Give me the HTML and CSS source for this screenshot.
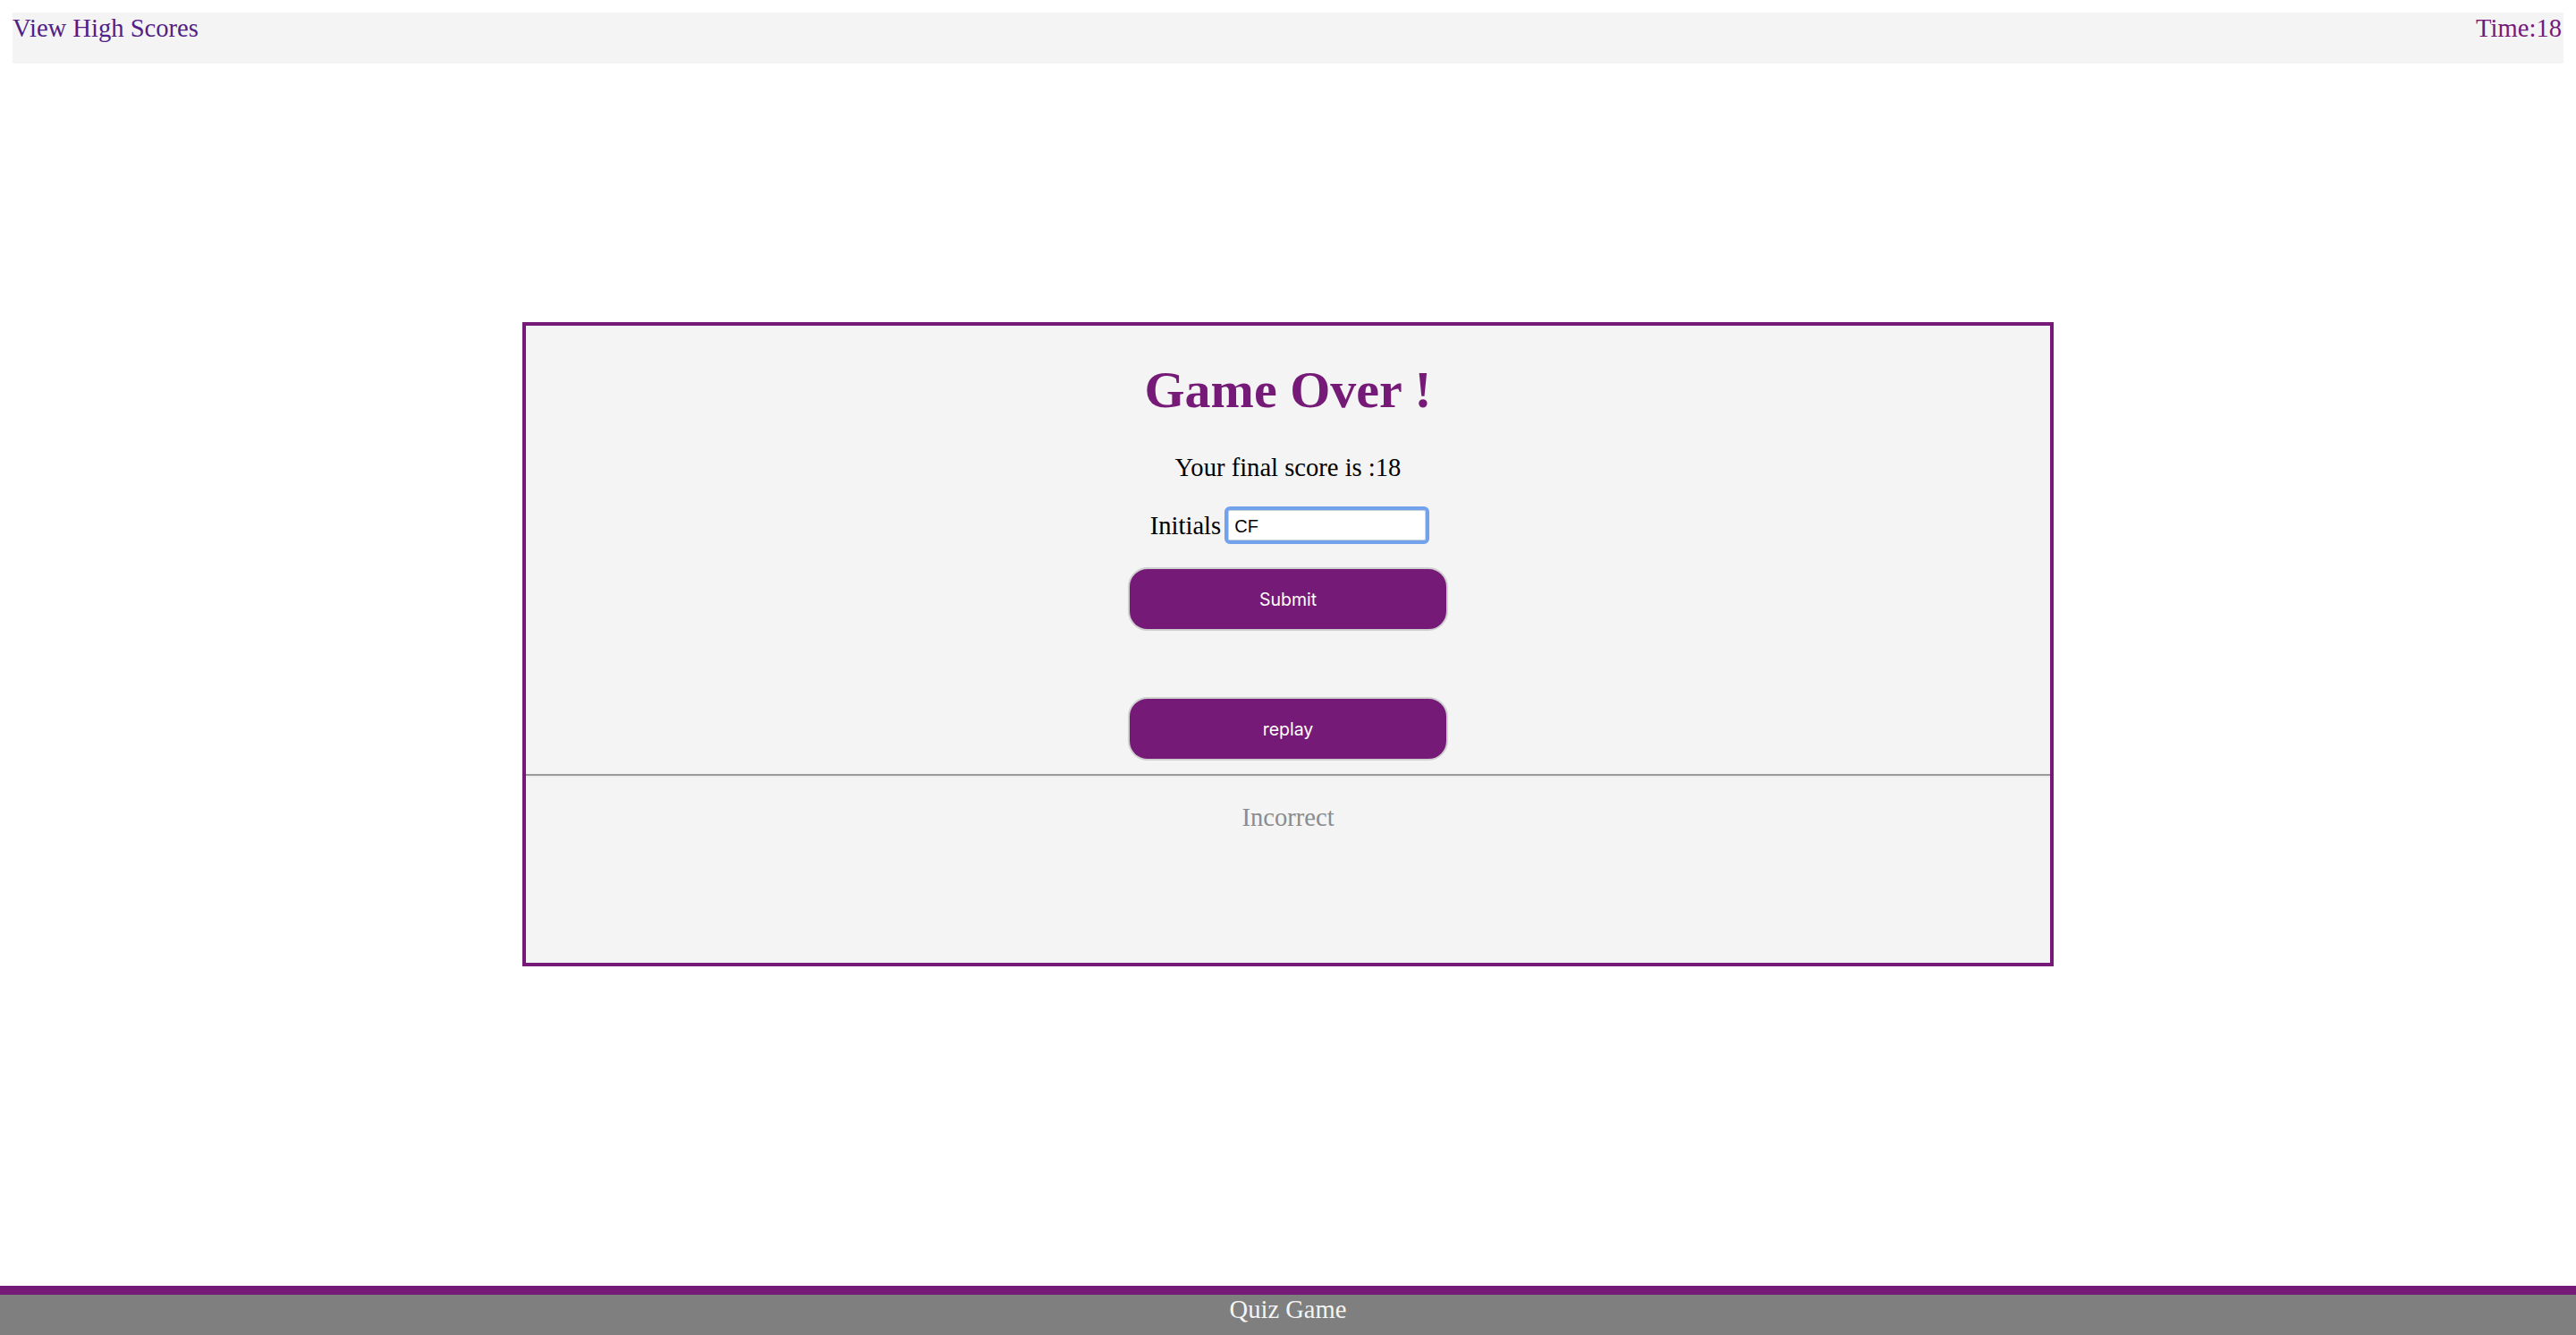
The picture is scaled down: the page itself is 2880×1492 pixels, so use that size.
FILE: index.html
```html
<!DOCTYPE html>
<html lang="en">
<head>
<meta charset="utf-8">
<title>Quiz Game</title>
<link rel="stylesheet" href="styles.css">
</head>
<body>
  <header class="topbar">
    <a class="scores-link" href="#">View High Scores</a>
    <span class="timer">Time:18</span>
  </header>

  <main class="card">
    <section class="card-body">
      <h1 class="title">Game Over !</h1>
      <p class="score">Your final score is :18</p>
      <div class="initials-row">
        <label class="initials-label" for="initials">Initials</label>
        <input class="initials-input" id="initials" type="text" value="CF">
      </div>
      <button class="btn btn-submit" type="button">Submit</button>
      <button class="btn btn-replay" type="button">replay</button>
    </section>
    <hr class="divider">
    <p class="feedback">Incorrect</p>
  </main>

  <footer class="footer">Quiz Game</footer>
</body>
</html>
```

FILE: styles.css
```css
html, body {
  margin: 0;
  padding: 0;
}

body {
  display: flex;
  flex-direction: column;
  min-height: 100vh;
  background: #ffffff;
  font-family: "Liberation Serif", "Times New Roman", serif;
  font-size: 28.6px;
  color: #000000;
}

.topbar {
  margin: 14px 14px 0;
  height: 57px;
  box-sizing: border-box;
  padding-top: 2px;
  background: #f4f4f4;
  display: flex;
  justify-content: space-between;
  align-items: flex-start;
  line-height: 31px;
}

.scores-link {
  color: #521f87;
  text-decoration: none;
}

.timer {
  color: #761a78;
  margin-right: 2px;
}

.card {
  margin: 289px auto 0;
  width: 1712px;
  height: 720px;
  box-sizing: border-box;
  border: 4px solid #761a78;
  background: #f4f4f4;
  display: flex;
  flex-direction: column;
}

.card-body {
  display: flex;
  flex-direction: column;
  align-items: center;
}

.title {
  margin: 41px 0 0;
  font-size: 58px;
  font-weight: bold;
  color: #761a78;
  line-height: 62px;
}

.score {
  margin: 40px 0 0;
  line-height: 31px;
}

.initials-row {
  margin-top: 32px;
  height: 34px;
  display: flex;
  align-items: center;
  gap: 8px;
}

.initials-label {
  line-height: 31px;
}

.initials-input {
  width: 221px;
  height: 34px;
  box-sizing: border-box;
  border: 1px solid #c6cfdc;
  border-radius: 2px;
  outline: 4px solid #72a2ec;
  outline-offset: 0;
  background: #ffffff;
  padding: 2px 6px 0;
  font-family: "Liberation Sans", Arial, sans-serif;
  font-size: 20px;
  color: #000000;
}

.btn {
  width: 358px;
  height: 71px;
  box-sizing: border-box;
  border: 2px solid #cfcfcf;
  border-radius: 22px;
  background: #761a78;
  color: #ffffff;
  font-family: Inter, "Liberation Sans", sans-serif;
  font-size: 19.5px;
  cursor: pointer;
}

.btn-submit {
  margin-top: 30px;
}

.btn-replay {
  margin-top: 74px;
}

.divider {
  margin: 15px 0 0;
  border: 0;
  border-top: 2px solid #9a9a9a;
  border-bottom: 2px solid #ececec;
  height: 0;
}

.feedback {
  margin: 29px 0 0;
  text-align: center;
  color: #8c8c8c;
  line-height: 31px;
}

.footer {
  margin-top: auto;
  border-top: 10px solid #761a78;
  background: #7f7f7f;
  height: 44px;
  color: #f4f4f4;
  text-align: center;
  line-height: 31px;
  padding-top: 1px;
  box-sizing: content-box;
}
```
